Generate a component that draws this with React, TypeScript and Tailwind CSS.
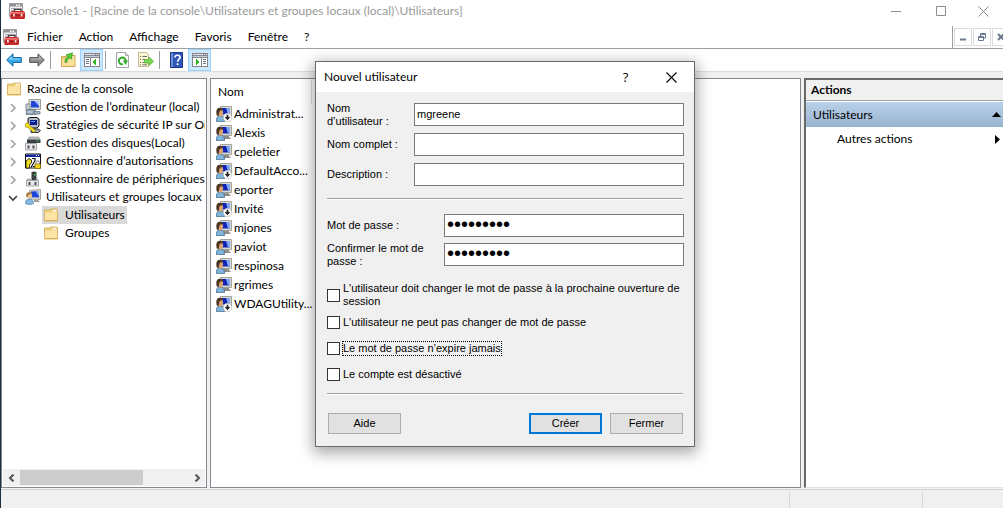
import React from "react";

const INK = "#000000";

function ToolboxIcon() {
  return (
    <svg width="16" height="16" viewBox="0 0 16 16" aria-hidden="true" className="shrink-0">
      <path d="M.5.5h13v13H.5z" fill="#f1f2f3" stroke="#9b9da1" />
      <path d="M1 1h12v2.500H1z" fill="#8f9297" />
      <path d="M7 1.500h1.500V3H7zM9.500 1.500H11V3H9.500z" fill="#fff" />
      <path d="M2 5.500h3M2 7.500h2.500" stroke="#a9adb3" />
      <path d="M5.500 9V6.200h6.500V9" fill="none" stroke="#4d4444" strokeWidth="1.500" />
      <path d="M1.500 9 3 8h11.500l1.500 1.200V15l-1 1H1.500z" fill="#c9282b" />
      <path d="M2 9h13.500v1.800H2z" fill="#ea7472" />
      <path d="M1.500 11.800H16v.9H1.500z" fill="#8f1a1d" />
      <path d="M4 11h1.800v2.500H4zM11.700 11h1.800v2.500h-1.800z" fill="#f6dada" />
    </svg>
  );
}

function FolderIcon() {
  return (
    <svg width="14" height="14" viewBox="0 0 14 14" aria-hidden="true" className="shrink-0">
      <path d="M.5 2h5l1-1H13l.5 1v11H.5z" fill="#efcf80" stroke="#d3a94f" strokeWidth=".8" />
      <path d="M8.500 1.800h4v1.500h-4z" fill="#fffaf0" />
      <path d="M1 4.500h6.500l1-1H13v9H1z" fill="#fbe4a6" />
      <path d="M1 12.500h12" stroke="#d9b057" />
    </svg>
  );
}

function ComputerIcon() {
  return (
    <svg width="16" height="16" viewBox="0 0 16 16" aria-hidden="true" className="shrink-0">
      <path d="M4 .5h11.500v10H4z" fill="#dcdcd6" stroke="#9a9a96" />
      <path d="M6 2h8v6.500H6z" fill="#2346d8" />
      <path d="M9.500 2H14v5z" fill="#a9c6ff" />
      <path d="M1 5h4v7H1z" fill="#c9ced3" stroke="#848b92" />
      <path d="M2 10.500h8l1 5H1z" fill="#8fa3b5" stroke="#66788a" strokeWidth=".8" />
      <path d="M9 12.500h6v2.500H9z" fill="#a9b6c2" stroke="#66788a" strokeWidth=".8" />
      <path d="M2.500 13h5" stroke="#e6edf3" />
    </svg>
  );
}

function SecurityIcon() {
  return (
    <svg width="16" height="16" viewBox="0 0 16 16" aria-hidden="true" className="shrink-0">
      <path d="M3 1.500 5 .5h7l2 1.500v7l-2 2H4L3 9z" fill="#b7bac4" stroke="#111" />
      <path d="M5 3h7v5H5z" fill="#0b1c8e" />
      <path d="M6 4h4v1H6z" fill="#4aa3ff" />
      <path d="M6 12h7l2.500 1.500-2 2H6z" fill="#a3a6ad" stroke="#111" strokeWidth=".8" />
      <path d="M.5 7 3 5.500l1.500 3 6 5-1.500 2-6-5L.5 10z" fill="#f7e017" stroke="#8a7900" strokeWidth=".6" />
    </svg>
  );
}

function DiskIcon() {
  return (
    <svg width="16" height="16" viewBox="0 0 16 16" aria-hidden="true" className="shrink-0">
      <path d="M4 1.500h10l1.500 3H2z" fill="#aeb1b4" />
      <path d="M2 4.500h13.500v3.500H2z" fill="#3b3e42" />
      <path d="M11.500 5.500h2v1h-2z" fill="#35e04a" />
      <path d="M.5 8.500h11v6.500H.5z" fill="#e8e9ea" stroke="#a2a5a8" />
      <path d="M2.500 10.500h2v3h-2zM7.500 10.500h2v3h-2z" fill="#4a4d51" />
    </svg>
  );
}

function AuthorizationIcon() {
  return (
    <svg width="16" height="16" viewBox="0 0 16 16" aria-hidden="true" className="shrink-0">
      <path d="M.5 1h15v14H.5z" fill="#fff" stroke="#111" />
      <path d="M1 1.500h14v2.500H1z" fill="#142a9c" />
      <path d="M11 2h1v1h-1zM13 2h1v1h-1z" fill="#fff" />
      <path d="M1 8 4 5.500 6.500 7v3l-2 1.500V15H1z" fill="#f0dc1e" stroke="#111" strokeWidth=".8" />
      <path d="M7 5.500h3v2L6 14.500M8 13.500h2" fill="none" stroke="#111" strokeWidth="1.200" />
      <path d="M11 11V9.500a1.700 1.700 0 0 1 3.400 0V11" fill="none" stroke="#777" />
      <path d="M10 11h5.500v4.500H10z" fill="#f6d21c" stroke="#7d6800" strokeWidth=".7" />
    </svg>
  );
}

function DeviceIcon() {
  return (
    <svg width="16" height="16" viewBox="0 0 16 16" aria-hidden="true" className="shrink-0">
      <path d="M6.500 1 9 .5 11.500 1v8h-5z" fill="#3b3e42" />
      <path d="M9 3h1.500v1.500H9z" fill="#35e04a" />
      <path d="M2 7.500h4.500V9h5V7.500H13l.8 2H1.200z" fill="#b2b5b8" />
      <path d="M1.500 9.500h12v5.500h-12z" fill="#e8e9ea" stroke="#a2a5a8" />
      <path d="M3.500 11h2v3h-2zM9.500 11h2v3h-2z" fill="#4a4d51" />
    </svg>
  );
}

function UserIcon({ disabled = false }: { disabled?: boolean }) {
  return (
    <svg width="16" height="16" viewBox="0 0 16 16" aria-hidden="true" className="shrink-0">
      <path d="M4.500.5h11v10h-11z" fill="#d9d8d0" stroke="#a5a49c" />
      <path d="M6 2h8v6.500H6z" fill="#1024b8" />
      <path d="M10 2h4v6.500h-2z" fill="#7fa6f2" />
      <path d="M8 11h5v1.500h1.500V14H8z" fill="#8f8e88" />
      <path d="M.4 15.600c-.2-3.600.6-5.600 3.800-5.600s4.300 2 4.300 5.600z" fill="#7fb4dc" stroke="#41698a" strokeWidth=".8" />
      <path d="M2 3.500h4.500l.7 3-1 3L4.500 11 2.500 9.500z" fill="#dfa673" />
      <path d="M.7 9.500C-.2 5 .3 1.800 3.800 1.700 6 1.700 7.300 2.800 7.200 4.500 5 4 3.600 4.500 3.300 6.500l-.6 3.500z" fill="#4e3723" />
      {disabled && (
        <>
          <circle cx="11.500" cy="11.500" r="4.300" fill="#fff" stroke="#a5a5a5" strokeWidth=".6" />
          <path d="M10.600 8.800h1.800v2.200h1.900L11.500 14.200 8.700 11h1.900z" fill="#222" />
        </>
      )}
    </svg>
  );
}

function UsersGroupIcon() {
  return (
    <svg width="16" height="16" viewBox="0 0 16 16" aria-hidden="true" className="shrink-0">
      <path d="M4.500 1.500 15.500.5v10l-11-.5z" fill="#d9d8d0" stroke="#a5a49c" />
      <path d="M6 2.500 14 2v6.500l-8-.3z" fill="#1f45dd" />
      <path d="M10.500 2.200 14 2v5z" fill="#8db2f8" />
      <path d="M9 11h4l2 2H9z" fill="#9c9b95" />
      <path d="M.5 14.500c0-3 1-4.500 3.700-4.500S8.500 11.500 8.500 14.500c-2 1.300-6 1.300-8 0z" fill="#86b9df" stroke="#4a80aa" strokeWidth=".7" />
      <circle cx="4.200" cy="6.500" r="2.900" fill="#ecc79a" />
      <path d="M1.200 7.500C.8 4 2.600 3 4.600 3.200 6.400 3.400 7.200 4.500 6.900 5.500 5 5 3 5.500 2.400 8.500z" fill="#a87c4a" />
    </svg>
  );
}

function ArrowIcon({ back = false }: { back?: boolean }) {
  return back ? (
    <svg width="16" height="14" viewBox="0 0 16 14" aria-hidden="true">
      <path d="M.7 7 7 .8v3.700h8.300v5H7v3.700z" fill="#35a9e6" stroke="#1a6ba6" />
      <path d="M2.500 6.500 6 3v2.500h8.300v1z" fill="#8fd6fa" />
    </svg>
  ) : (
    <svg width="16" height="14" viewBox="0 0 16 14" aria-hidden="true">
      <path d="M15.300 7 9 .8v3.700H.7v5H9v3.700z" fill="#8b8b8b" stroke="#5c5c5c" />
      <path d="M13.500 6.500 10 3v2.500H1.700v1z" fill="#b5b5b5" />
    </svg>
  );
}

function FolderUpIcon() {
  return (
    <svg width="15" height="16" viewBox="0 0 15 16" aria-hidden="true">
      <path d="M.5 4.500h5l1.500-1h7v11H.5z" fill="#edcd80" stroke="#cda450" />
      <path d="M9.500 4.500h3.500v1.200H9.500z" fill="#fff" />
      <path d="M1 7.500h6.500l1-1H13.500v7.500H1z" fill="#f9e09c" />
      <path d="M4 10.500c0-3 1-4.800 2.800-5.800L5 3 11.500.8 10.500 7 8.800 5.800C7 6.800 6.200 8 5.600 10.500z" fill="#58cc36" stroke="#2f951c" strokeWidth=".7" />
    </svg>
  );
}

function PaneIcon({ right = false }: { right?: boolean }) {
  return (
    <svg width="16" height="14" viewBox="0 0 16 14" shapeRendering="crispEdges" aria-hidden="true">
      <path d="M0 0h16v14H0z" fill="#84878d" />
      <path d="M1 1h10v1H1zM12 1h1v1h-1zM14 1h1v1h-1z" fill="#e4e6e9" />
      <path d="M1 3h14v1H1z" fill="#c9ccd0" />
      {right ? (
        <>
          <path d="M1 5h8v8H1zM10 5h5v8h-5z" fill="#fff" />
          <path d="M11 6h3v1h-3zM11 8h3v1h-3zM11 10h3v1h-3z" fill="#6b7079" />
          <path d="M4 6l4 3-4 3z" fill="#2fb51e" />
        </>
      ) : (
        <>
          <path d="M1 5h5v8H1zM7 5h8v8H7z" fill="#fff" />
          <path d="M2 6h3v1H2zM2 8h3v1H2zM2 10h3v1H2z" fill="#6b7079" />
          <path d="M12 6L8 9l4 3z" fill="#2fb51e" />
        </>
      )}
    </svg>
  );
}

function RefreshIcon() {
  return (
    <svg width="13" height="16" viewBox="0 0 13 16" aria-hidden="true">
      <path d="M.5.5h9l3 3v12H.5z" fill="#fdfdfd" stroke="#a3a6aa" />
      <path d="M9.500.5v3h3" fill="#e3e5e8" stroke="#a3a6aa" />
      <path d="M6.800 12.300A3.400 3.400 0 1 1 9.700 9" fill="none" stroke="#31ad2b" strokeWidth="2" />
      <path d="M7 8.500h5L9.500 13z" fill="#31ad2b" />
    </svg>
  );
}

function ExportIcon() {
  return (
    <svg width="16" height="16" viewBox="0 0 16 16" aria-hidden="true">
      <path d="M.5.500h8l2 2v12H.5z" fill="#fbf5d3" stroke="#c5bd93" />
      <path d="M2 4.500h1M4.500 4.500H9M2 7.500h1M4.500 7.500H7M2 10.500h1M4.500 10.500H7M2 12.800h1M4.500 12.800H9" stroke="#6b6d70" />
      <path d="M6.500 7.500H11V5l4.600 4.300L11 13.500V11H6.500z" fill="#7bd850" stroke="#4bae30" strokeWidth=".7" />
    </svg>
  );
}

function HelpIcon() {
  return (
    <svg width="13" height="16" viewBox="0 0 13 16" aria-hidden="true">
      <path d="M.5.5h12v15H.5z" fill="#2f57b8" stroke="#1b3682" />
      <path d="M1 1h2v14H1z" fill="#6f90dd" />
      <path d="M5 5.500c0-3 5-3 5 0 0 2-2.400 2-2.400 4.300" fill="none" stroke="#fff" strokeWidth="1.700" />
      <path d="M6.700 11.300h1.800V13H6.700z" fill="#fff" />
    </svg>
  );
}

function Chevron({ open = false }: { open?: boolean }) {
  return (
    <svg width="10" height="10" viewBox="0 0 10 10" aria-hidden="true" fill="none" strokeWidth="1.600">
      {open ? <path d="M1 3l4 4 4-4" stroke="#404040" /> : <path d="M3 1l4 4-4 4" stroke="#a0a0a0" />}
    </svg>
  );
}

const menus = ["Fichier", "Action", "Affichage", "Favoris", "Fenêtre", "?"];

const snapIns = [
  { label: "Gestion de l’ordinateur (local)", icon: <ComputerIcon /> },
  { label: "Stratégies de sécurité IP sur Or", icon: <SecurityIcon /> },
  { label: "Gestion des disques(Local)", icon: <DiskIcon /> },
  { label: "Gestionnaire d’autorisations", icon: <AuthorizationIcon /> },
  { label: "Gestionnaire de périphériques", icon: <DeviceIcon /> },
  { label: "Utilisateurs et groupes locaux (", icon: <UsersGroupIcon />, open: true },
];

const users = [
  { name: "Administrat...", disabled: true },
  { name: "Alexis" },
  { name: "cpeletier" },
  { name: "DefaultAcco...", disabled: true },
  { name: "eporter" },
  { name: "Invité", disabled: true },
  { name: "mjones" },
  { name: "paviot" },
  { name: "respinosa" },
  { name: "rgrimes" },
  { name: "WDAGUtility...", disabled: true },
];

function TitleBar() {
  return (
    <header className="flex h-[22px] items-center bg-white pl-[8px] text-[#999999]">
      <ToolboxIcon />
      <h1 className="ml-[5px] flex-1 truncate">Console1 - [Racine de la console\Utilisateurs et groupes locaux (local)\Utilisateurs]</h1>
      <div className="flex">
        <button type="button" aria-label="Réduire" className="flex w-[46px] justify-center">
          <svg width="11" height="11" viewBox="0 0 11 11"><path d="M0 5.500h10" stroke="#8c8c8c" /></svg>
        </button>
        <button type="button" aria-label="Agrandir" className="flex w-[45px] justify-center">
          <svg width="11" height="11" viewBox="0 0 11 11"><path d="M.5.500h9v9h-9z" fill="none" stroke="#8c8c8c" /></svg>
        </button>
        <button type="button" aria-label="Fermer la console" className="flex w-[39px] justify-center">
          <svg width="11" height="11" viewBox="0 0 11 11"><path d="M.5.500l10 10M10.500.500l-10 10" stroke="#8c8c8c" /></svg>
        </button>
      </div>
    </header>
  );
}

function MenuBar() {
  return (
    <nav className="flex h-[27px] items-stretch justify-between border-b border-[#a0a0a0] bg-white pl-[2px]">
      <div className="flex items-center pt-[3px]">
        <ToolboxIcon />
        <ul className="flex pl-[8px]">
          {menus.map((m) => (
            <li key={m} className="mr-[16px]">
              <button type="button">{m}</button>
            </li>
          ))}
        </ul>
      </div>
      <div className="mt-[4px] flex w-[51px] shrink-0 items-end gap-[1px] overflow-hidden border-l border-[#a0a0a0] pb-[2px] pl-[1px]">
        <button type="button" aria-label="Réduire la fenêtre" className="flex h-[18px] w-[18px] shrink-0 items-center justify-center border border-[#dcdcdc]">
          <svg width="8" height="8" viewBox="0 0 8 8"><path d="M1 6.500h6" stroke="#6b7a90" strokeWidth="2" /></svg>
        </button>
        <button type="button" aria-label="Restaurer la fenêtre" className="flex h-[18px] w-[18px] shrink-0 items-center justify-center border border-[#dcdcdc]">
          <svg width="8" height="8" viewBox="0 0 8 8" fill="none" stroke="#6b7a90"><path d="M.5 3.500h5v4h-5zM.5 4.500h5M2.500 3V.500h5v4.500H6M2.500 1.500h5" /></svg>
        </button>
        <button type="button" aria-label="Fermer la fenêtre" className="flex h-[18px] w-[18px] shrink-0 items-center justify-center border border-[#dcdcdc]">
          <svg width="8" height="8" viewBox="0 0 8 8"><path d="M1 1l6 6M7 1L1 7" stroke="#6b7a90" strokeWidth="2" /></svg>
        </button>
      </div>
    </nav>
  );
}

function ToolButton({ label, active = false, children }: { label: string; active?: boolean; children: React.ReactNode }) {
  return (
    <button
      type="button"
      aria-label={label}
      aria-pressed={active}
      className={
        active
          ? "flex h-[22px] w-[23px] items-center justify-center border border-[#99d1ff] bg-[#cce8ff]"
          : "flex h-[22px] w-[23px] items-center justify-center"
      }
    >
      {children}
    </button>
  );
}

function Separator() {
  return <span className="mx-[2px] h-[18px] w-px bg-[#a0a0a0]" />;
}

function ToolBar() {
  return (
    <div role="toolbar" aria-label="Outils" className="flex h-[23px] items-center border-b border-[#dcdcdc] bg-white pl-[1px]">
      <ToolButton label="Précédent"><ArrowIcon back /></ToolButton>
      <ToolButton label="Suivant"><ArrowIcon /></ToolButton>
      <Separator />
      <span className="w-[4px]" />
      <ToolButton label="Dossier parent"><FolderUpIcon /></ToolButton>
      <ToolButton label="Arborescence" active><PaneIcon /></ToolButton>
      <Separator />
      <span className="w-[3px]" />
      <ToolButton label="Actualiser"><RefreshIcon /></ToolButton>
      <ToolButton label="Exporter la liste"><ExportIcon /></ToolButton>
      <Separator />
      <span className="w-[3px]" />
      <ToolButton label="Aide"><HelpIcon /></ToolButton>
      <ToolButton label="Volet Actions" active><PaneIcon right /></ToolButton>
    </div>
  );
}

function TreePanel() {
  return (
    <aside className="flex w-[206px] shrink-0 flex-col border border-[#828790] bg-white p-[1px]">
      <ul className="min-h-0 flex-1 overflow-hidden whitespace-nowrap">
        <li className="flex h-[18px] items-center pl-[4px]">
          <FolderIcon />
          <span className="ml-[6px]">Racine de la console</span>
        </li>
        {snapIns.map((s) => (
          <li key={s.label} className="flex h-[18px] items-center pl-[5px]">
            <button type="button" aria-label={s.label} aria-expanded={!!s.open} className="flex w-[17px] shrink-0 pt-[1px]">
              <Chevron open={s.open} />
            </button>
            {s.icon}
            <span className="ml-[5px]">{s.label}</span>
          </li>
        ))}
        {["Utilisateurs", "Groupes"].map((f, i) => (
          <li key={f} className="flex h-[18px] pl-[39px]">
            <span className={i === 0 ? "flex items-center bg-[#d9d9d9] pl-[2px] pr-[2px]" : "flex items-center pl-[2px] pr-[2px]"}>
              <FolderIcon />
              <span className="ml-[7px]">{f}</span>
            </span>
          </li>
        ))}
      </ul>
      <div className="flex h-[17px] items-stretch bg-[#f0f0f0]">
        <button type="button" aria-label="Défiler à gauche" className="flex w-[17px] items-center justify-center">
          <svg width="8" height="8" viewBox="0 0 8 8"><path d="M5.500.500L2 4l3.500 3.500" fill="none" stroke="#555" strokeWidth="2" /></svg>
        </button>
        <div className="flex-1 py-[1px]">
          <div className="h-full w-[73%] bg-[#cdcdcd]" />
        </div>
        <button type="button" aria-label="Défiler à droite" className="flex w-[17px] items-center justify-center">
          <svg width="8" height="8" viewBox="0 0 8 8"><path d="M2.500.500L6 4 2.500 7.500" fill="none" stroke="#555" strokeWidth="2" /></svg>
        </button>
      </div>
    </aside>
  );
}

function UserList() {
  return (
    <main className="min-w-0 flex-1 border border-[#828790] bg-white p-[1px]">
      <div className="flex h-[24px] w-[100px] items-center border-r border-[#e0e0e0] pl-[6px]">Nom</div>
      <ul>
        {users.map((u) => (
          <li key={u.name} className="flex h-[19px] items-center pl-[4px]">
            <UserIcon disabled={u.disabled} />
            <span className="ml-[2px]">{u.name}</span>
          </li>
        ))}
      </ul>
    </main>
  );
}

function ActionsPanel() {
  return (
    <aside className="w-[199px] shrink-0 border-l-2 border-t-2 border-b border-b-[#e3e3e3] border-l-[#696969] border-t-[#696969] bg-white">
      <h2 className="flex h-[21px] items-center border-b border-[#a0a0a0] bg-[#f0f0f0] pl-[5px] font-bold">Actions</h2>
      <div className="mt-[1px] flex h-[25px] items-center justify-between bg-linear-to-b from-[#b9d1ea] to-[#99b4d1] pl-[7px] pr-[2px]">
        <span>Utilisateurs</span>
        <svg width="9" height="5" viewBox="0 0 9 5"><path d="M4.500 0L9 5H0z" fill={INK} /></svg>
      </div>
      <button type="button" className="flex h-[24px] w-full items-center justify-between pl-[31px] pr-[3px]">
        <span>Autres actions</span>
        <svg width="5" height="9" viewBox="0 0 5 9"><path d="M0 0l5 4.500L0 9z" fill={INK} /></svg>
      </button>
    </aside>
  );
}

function Rule() {
  return <div className="mr-[1px] h-[2px] border-t border-[#a0a0a0] bg-white" />;
}

function Field({ id, label, type = "text", value = "" }: { id: string; label: string; type?: string; value?: string }) {
  const secret = type === "password";
  return (
    <div className="flex h-[23px] items-center">
      <label htmlFor={id} className={secret ? "w-[117px] shrink-0 pr-[8px]" : "w-[87px] shrink-0 pr-[8px]"}>
        {label}
      </label>
      <input
        id={id}
        type={type}
        defaultValue={value}
        className={
          secret
            ? "h-[23px] min-w-0 flex-1 border border-[#7a7a7a] bg-white px-[2px] pb-[2px] text-[20px] leading-[20px] outline-none"
            : "h-[23px] min-w-0 flex-1 border border-[#7a7a7a] bg-white px-[2px] pb-[2px] outline-none"
        }
      />
    </div>
  );
}

function Check({ id, label, focused = false }: { id: string; label: string; focused?: boolean }) {
  return (
    <div className="flex min-h-[16px] items-center">
      <input id={id} type="checkbox" className="size-[13px] shrink-0 appearance-none border border-[#333333] bg-white checked:bg-[#0078d7]" />
      <label htmlFor={id} className={focused ? "ml-[2px] border border-dotted border-black" : "ml-[3px]"}>
        {label}
      </label>
    </div>
  );
}

function NewUserDialog() {
  return (
    <section
      role="dialog"
      aria-labelledby="dialog-title"
      className="absolute left-[314px] top-[61px] w-[380px] border border-[#6a6a6a] bg-[#f0f0f0] shadow-[0_4px_14px_2px_rgba(0,0,0,0.35)]"
    >
      <div className="flex h-[30px] items-center bg-white pl-[8px]">
        <h2 id="dialog-title" className="flex-1">Nouvel utilisateur</h2>
        <button type="button" aria-label="Aide contextuelle" className="w-[45px] font-['Open_Sans',sans-serif] text-[13px]">?</button>
        <button type="button" aria-label="Fermer la boîte de dialogue" className="flex w-[46px] justify-center">
          <svg width="11" height="11" viewBox="0 0 11 11"><path d="M.5.500l10 10M10.500.500l-10 10" stroke={INK} strokeWidth="1.100" /></svg>
        </button>
      </div>
      <form
        onSubmit={(e) => e.preventDefault()}
        className="pb-[12px] pl-[11px] pr-[10px] pt-[11px] font-['Liberation_Sans',Arial,sans-serif] text-[11px] leading-[13px]"
      >
        <div className="mb-[12px] flex flex-col gap-[7px]">
          <Field id="username" label="Nom d’utilisateur :" value="mgreene" />
          <Field id="fullname" label="Nom complet :" />
          <Field id="description" label="Description :" />
        </div>
        <Rule />
        <div className="mb-[16px] mt-[14px] flex flex-col gap-[6px]">
          <Field id="password" type="password" label="Mot de passe :" value="motpasse1" />
          <Field id="confirm" type="password" label="Confirmer le mot de passe :" value="motpasse1" />
        </div>
        <div className="mb-[6px]">
          <Check id="must-change" label="L'utilisateur doit changer le mot de passe à la prochaine ouverture de session" />
        </div>
        <div className="mb-[11px] flex flex-col gap-[10px]">
          <Check id="cannot-change" label="L'utilisateur ne peut pas changer de mot de passe" />
          <Check id="never-expires" label="Le mot de passe n’expire jamais" focused />
          <Check id="disabled" label="Le compte est désactivé" />
        </div>
        <Rule />
        <div className="mt-[18px] flex gap-[8px] pl-[1px] pr-[1px]">
          <button type="button" className="mr-auto h-[21px] w-[73px] border border-[#adadad] bg-[#e1e1e1]">Aide</button>
          <button type="submit" className="h-[21px] w-[73px] border-2 border-[#0078d7] bg-[#e1e1e1]">Créer</button>
          <button type="button" className="h-[21px] w-[73px] border border-[#adadad] bg-[#e1e1e1]">Fermer</button>
        </div>
      </form>
    </section>
  );
}

export default function App() {
  return (
    <div className="relative flex h-screen flex-col overflow-hidden border-l border-[#1f2d40] bg-[#f0f0f0] font-['Lato','Open_Sans',sans-serif] text-[12px] leading-[16px] text-black">
      <TitleBar />
      <MenuBar />
      <ToolBar />
      <div className="flex min-h-0 flex-1 gap-[3px] pb-[1px] pt-[6px]">
        <TreePanel />
        <UserList />
        <ActionsPanel />
      </div>
      <footer className="flex h-[19px] shrink-0 justify-end border-t border-[#d0d0d0] pt-[1px]">
        <div className="w-[133px] border-l border-[#d7d7d7]" />
        <div className="w-[81px] border-l border-[#d7d7d7]" />
      </footer>
      <NewUserDialog />
    </div>
  );
}
